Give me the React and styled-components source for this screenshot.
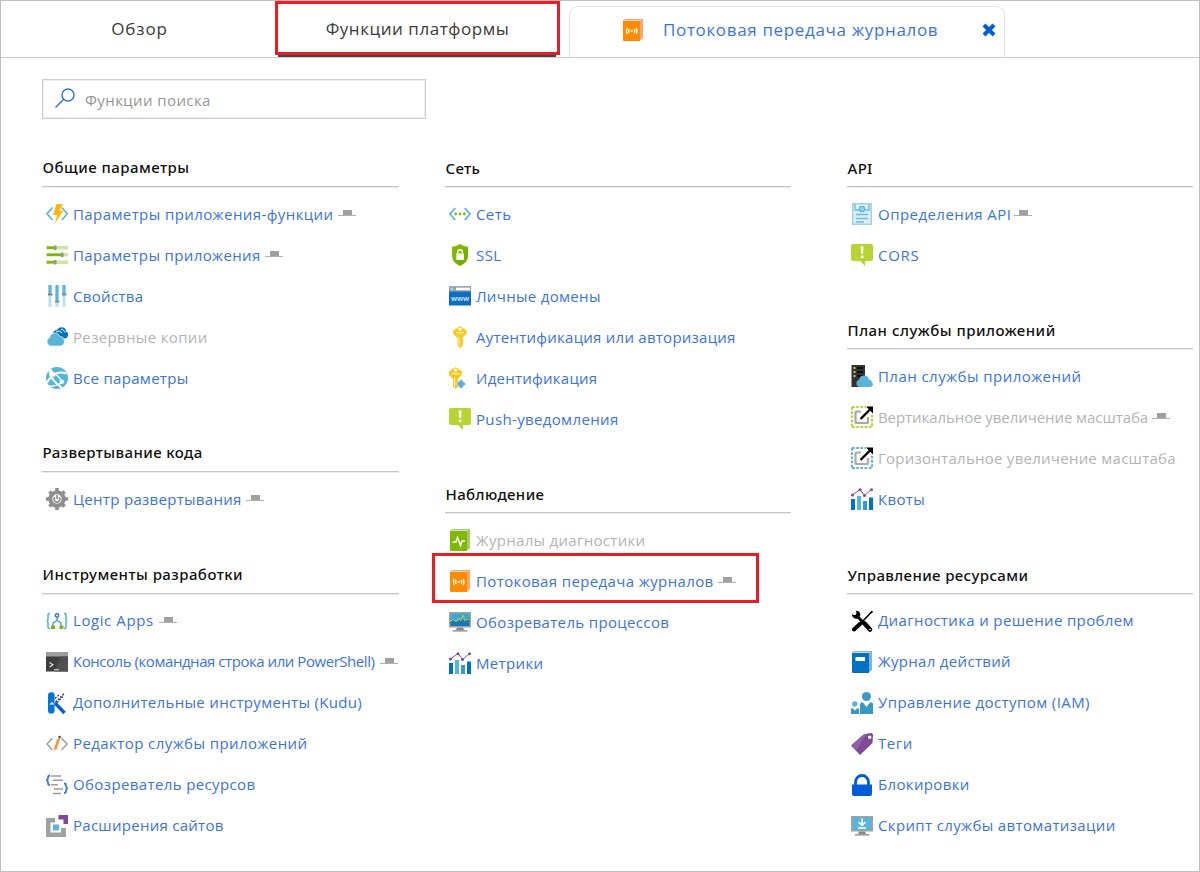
import React from 'react';
import styled, { createGlobalStyle } from 'styled-components';

const GlobalStyle = createGlobalStyle`
  * { box-sizing: border-box; }
  body {
    margin: 0;
    background: #fff;
    font-family: 'Open Sans', 'Noto Sans', sans-serif;
  }
`;

const BLUE = '#3b73dd';
const RED = '#ed1c24';

const Page = styled.div`
  width: 1200px;
  height: 872px;
  overflow: hidden;
  border: 1px solid #c0c0c0;
  background: #fff;
`;

const TabBar = styled.nav`
  display: flex;
  height: 57px;
  border-bottom: 1px solid #c9cccd;
  font-size: 17px;
  color: #3a3a3a;
`;

const Tab = styled.div`
  display: flex;
  justify-content: center;
  width: ${(p) => p.$width}px;
  padding: 15px 0 0 4px;
  line-height: 26px;
  letter-spacing: ${(p) => p.$tracking}px;
`;

const ActiveTab = styled(Tab)`
  position: relative;
  height: 54px;
  margin-left: 1px;
  padding: 12px 0 0;
  border: 3px solid ${RED};

  &::after {
    content: '';
    position: absolute;
    left: 0;
    right: 1px;
    bottom: -5px;
    height: 2px;
    background: #454545;
  }
`;

const OpenTab = styled.div`
  display: flex;
  align-items: flex-start;
  width: 436px;
  height: 51px;
  margin: 5px 0 0 9px;
  padding: 10px 8px 0 52px;
  border: 1px solid #dbe3e7;
  border-bottom: 0;
  border-radius: 9px 9px 0 0;
  color: ${BLUE};
  line-height: 26px;
  letter-spacing: 0.65px;
`;

const OpenTabTitle = styled.span`
  flex: 1;
  margin-left: 19px;
  white-space: nowrap;
`;

const CloseIcon = styled.svg`
  width: 14px;
  height: 14px;
  margin-top: 6px;
`;

const Search = styled.label`
  display: flex;
  align-items: center;
  gap: 9px;
  width: 384px;
  height: 40px;
  margin: 21px 0 0 41px;
  padding: 2px 0 0 11px;
  border: 1.5px solid #cdcdcd;
  box-shadow: inset 0 0 0 1px #efefef;
  color: #959595;
  font-size: 15px;
  letter-spacing: 0.4px;
`;

const SearchIcon = styled.svg`
  width: 22px;
  height: 22px;
  margin-bottom: 4px;
`;

const Columns = styled.main`
  display: grid;
  grid-template-columns: 403px 402px 346px;
  margin: 38px 0 0 41px;
`;

const Column = styled.div`
  display: flex;
  flex-direction: column;
  width: ${(p) => p.$width}px;
`;

const Section = styled.section`
  margin-bottom: ${(p) => p.$after ?? 43}px;
`;

const SectionTitle = styled.h2`
  height: 30px;
  margin: 0;
  padding: ${(p) => p.$drop ?? 0}px 0 0 0.5px;
  border-bottom: 1px solid #c6c6c6;
  box-shadow: 0 1px 0 #ececec;
  color: #111;
  font-family: 'Noto Sans', sans-serif;
  font-size: 15px;
  font-weight: 500;
  line-height: 21px;
  letter-spacing: ${(p) => p.$tracking}px;
  white-space: nowrap;
`;

const List = styled.ul`
  margin: 0;
  padding: 7px 0 0 4px;
  list-style: none;
`;

const Row = styled.li`
  position: relative;
  display: flex;
  align-items: center;
  height: 41px;
`;

const RowIcon = styled.svg`
  flex: none;
  width: 22px;
  height: 22px;
  margin: 0 5px 1px 0;
`;

const TabIcon = styled(RowIcon)`
  margin: 2px 0 0;
`;

const RowLabel = styled.span`
  margin-bottom: ${(p) => p.$lift ?? 2}px;
  color: ${(p) => (p.$muted ? '#b3b3b3' : BLUE)};
  font-size: 15px;
  line-height: 22px;
  letter-spacing: ${(p) => p.$tracking}px;
  white-space: nowrap;
`;

const PinIcon = styled.svg`
  flex: none;
  width: 18px;
  height: 7px;
  margin: 0 0 2px ${(p) => p.$gap ?? 4}px;
`;

const Highlight = styled.div`
  position: absolute;
  left: -17px;
  top: -8px;
  width: 327px;
  height: 50px;
  border: 3px solid ${RED};
`;

const Pin = ({ gap }) => (
  <PinIcon viewBox="0 0 18 7" $gap={gap}>
    <path d="M5 0h9v5H5z" fill="#a0a0a0" />
    <path d="M0 5.500h18" stroke="#b0b0b0" />
  </PinIcon>
);

const chart = (
  <>
    <path d="M0 11h4v11H0z" fill="#0072c6" />
    <path d="M6 8h4v14H6z" fill="#59b4d9" />
    <path d="M12 13h4v9h-4z" fill="#3999c6" />
    <path d="M18 9.500h4V22h-4z" fill="#0072c6" />
    <path d="M1.500 7 9 1.500l4.500 6L20.500 1.500" fill="none" stroke="#804998" />
    <g fill="#804998"><circle cx="1.500" cy="7" r="1.500" /><circle cx="9" cy="1.700" r="1.500" /><circle cx="13.500" cy="7.500" r="1.500" /><circle cx="20.500" cy="1.700" r="1.500" /></g>
  </>
);

const bubble = (
  <>
    <path d="M2 0h18a2 2 0 0 1 2 2v13a2 2 0 0 1-2 2h-6v5l-5-5H2a2 2 0 0 1-2-2V2a2 2 0 0 1 2-2z" fill="#b8d432" />
    <path d="M9.700 2.500h2.800l-.4 7.500h-2z" fill="#fff" />
    <circle cx="11.100" cy="12.700" r="1.500" fill="#fff" />
  </>
);

const scale = (color) => (
  <>
    <path d="M1 1h14M1 21h20V9M1 1v20" fill="none" stroke={color} strokeWidth="2" strokeDasharray="2.700 1.500" />
    <path d="M10 5.500H6A1.500 1.500 0 0 0 4.500 7v8.500A1.500 1.500 0 0 0 6 17h9.500a1.500 1.500 0 0 0 1.500-1.500V11" fill="none" stroke="#a8a9aa" strokeWidth="2.200" />
    <path d="M9.500 13 19 3.500" stroke="#000" strokeWidth="2.400" />
    <path d="M15 .5h7v7z" fill="#000" />
  </>
);

const book = (cover, side, mark) => (
  <>
    <path d="M3 0h18v19l-2 2H1V2z" fill={side} />
    <path d="M3 1h16v1H2z" fill="#e6e6e6" opacity=".8" />
    <path d="M1 2h17v20H2a1 1 0 0 1-1-1z" fill={cover} />
    {mark}
  </>
);

const stream = book('#ff8c00', '#f9a86c', (
  <g fill="none" stroke="#fff" strokeWidth="1.300">
    <circle cx="9.700" cy="12" r="1.100" fill="#fff" stroke="none" />
    <path d="M7.300 10q-1.400 2 0 4M12.100 10q1.400 2 0 4M5.300 9q-1.700 3 0 6M14.100 9q1.700 3 0 6" />
  </g>
));

const key = (
  <path fillRule="evenodd" d="M11 0 17.500 4.500Q18.500 6.500 16.500 8.500L13.500 12v1.500l1.200 1.200-1.200 1.300 1 1.200-1 1.300V20L11 22l-2.500-2v-8L5 8.500Q3.500 6.500 4.500 4.500zM11 1.500a1.600 1.600 0 1 0 .01 0zM7 6.200h8v1H7zM9.700 11v8.500l.8.7V11z" fill="#fcc81e" />
);

const icons = {
  bolt: (
    <>
      <path d="M6.500 4.500 1 10.700l5.500 6.300M15.800 4.500l5.500 6.200-5.500 6.300" fill="none" stroke="#59b4d9" strokeWidth="1.600" />
      <path d="M10.500 1H17l-3.500 6.700H17.500L8.500 21l2.800-9H7z" fill="#fdb813" />
    </>
  ),
  sliders: (
    <>
      <path d="M0 2h22v3.500H0zM0 9h22v3.500H0zM0 16.500h22V20H0z" fill="#cfe3a0" />
      <path d="M1 2.500h8v2.500H1zM1 9.500h14V12H1zM1 17h8v2.500H1z" fill="#7fba00" />
      <path d="M8 1.500h2.500v4.500H8zM15 8.500h2.500V13H15zM8 16h2.500v4.500H8z" fill="#969696" />
    </>
  ),
  properties: (
    <>
      <path d="M2.500 0h3v22h-3zM9.500 0h3v22h-3zM16.500 0h3v22h-3z" fill="#bcdfee" />
      <path d="M2.500 0h3v9h-3zM9.500 0h3v16h-3zM16.500 0h3v9h-3z" fill="#59b4d9" />
      <path d="M2 9.500h4.500M9 16.700h4.500M16 9.500h4.500" stroke="#888" strokeWidth="1.800" />
    </>
  ),
  clouds: (
    <>
      <path d="M7 7Q8 4 11 4q2-3.500 6-2.500 3 .7 3 4 2.500 1 2 4-.5 3-4 3H8z" fill="#0072c6" />
      <path d="M10 5.500q4-1.500 6 1.500M15 3q3 .500 4 3.500" fill="none" stroke="#fff" />
      <path d="M4.500 20a4.500 4.500 0 0 1-.8-8.500Q4.500 7 9 7q3.500 0 5 3.500 3.500-.3 4 3 1 1.500.2 3.500-.9 3-4.200 3z" fill="#59b4d9" stroke="#fff" strokeWidth=".6" />
    </>
  ),
  globe: (
    <>
      <circle cx="11" cy="11" r="11" fill="#59b4d9" />
      <path d="M3.500 4.500Q4 12 16 21M1 15.500Q5 9 8 7.500 13 4 20.500 6.500" fill="none" stroke="#fff" strokeWidth="2" />
      <path d="M7.500 7.500q4-1 8.500 7.500M3.500 19Q9 20 16 15.500" fill="none" stroke="#fff" strokeWidth="1.400" />
      <circle cx="7" cy="7.500" r="2.400" fill="#fff" /><circle cx="15.800" cy="14.800" r="2.200" fill="#fff" />
      <path d="M2.500 4 5 1.500 8 6 4 9z" fill="#fff" />
    </>
  ),
  gear: (
    <>
      <circle cx="11" cy="11" r="6.700" fill="none" stroke="#8f8f8f" strokeWidth="4" />
      <g stroke="#8f8f8f" strokeWidth="3.600"><path d="M11 0v4M11 18v4M0 11h4M18 11h4M3.400 3.400l3 3M15.600 15.600l3 3M18.600 3.400l-3 3M6.400 15.600l-3 3" /></g>
      <path d="M9 9.300a2.800 2.800 0 1 0 4 0M11 7v4" fill="none" stroke="#8f8f8f" strokeWidth="1.700" />
    </>
  ),
  logic: (
    <>
      <path d="M4 3.500H3.200Q2 3.500 2 5v4q0 2-1.500 2Q2 11 2 13v4q0 1.500 1.200 1.500H4M18 3.500h.8Q20 3.500 20 5v4q0 2 1.500 2Q20 11 20 13v4q0 1.500-1.200 1.500H18" fill="none" stroke="#59b4d9" strokeWidth="1.600" />
      <path d="M11 6.500v4M7 16v-3l4-2.500 4 2.500v3" fill="none" stroke="#3999c6" strokeWidth="1.300" />
      <circle cx="11" cy="5.500" r="1.700" fill="#fff" stroke="#3b73b9" strokeWidth="1.500" />
      <path d="M5 15.500h4V19H5zM13.500 15.500h4V19h-4z" fill="#7fba00" />
    </>
  ),
  console: (
    <>
      <path d="M0 1.500h22v19H0z" fill="#3e3e3e" />
      <path d="M0 1.500h22v4H0z" fill="#9c9c9c" />
      <path d="M15 5.500h7v15H8z" fill="#505050" />
      <path d="M3.500 11.500 7 13.700 3.500 16M8 18.700h5" fill="none" stroke="#e4e4e4" strokeWidth="1.100" />
    </>
  ),
  kudu: (
    <>
      <path d="M2 3.500a3.300 3.300 0 0 1 6.600 0v15a3.300 3.300 0 0 1-6.600 0z" fill="#0078d0" />
      <path d="m9 11 9.500 10" stroke="#0a5bd0" strokeWidth="3.400" />
      <path d="M3.500 12.500 6 10l2.500 2.500z" fill="#fff" />
      <path d="m9.500 10 9-9M11 10.500l7-7M9 6.500l4-3.500" stroke="#333" strokeWidth="1.200" strokeDasharray="2 1.200" />
    </>
  ),
  editor: (
    <>
      <path d="M6.500 5 1 11l5.500 6M15.500 5l5.500 6-5.500 6" fill="none" stroke="#a0a1a2" strokeWidth="1.600" />
      <path d="m9 16.500 4-11" stroke="#f7943b" strokeWidth="2.600" />
      <path d="m7.600 19 .3-3 2.400.8z" fill="#e5c29a" /><circle cx="13.600" cy="4" r="1.300" fill="#444" />
    </>
  ),
  resources: (
    <>
      <path d="M4 1.500Q2 1.500 2 3.500T.7 6.300Q2 7 2 9t2 2M18 9.500q2 0 2 2t1.300 2.800Q20 15 20 17t-2 2.200" fill="none" stroke="#3b73dd" strokeWidth="1.800" />
      <path d="M5 2h10M7 6.300h10M5 10.700h7M8 15h9M7 19.500h8" stroke="#9a9a9a" strokeWidth="1.500" />
    </>
  ),
  extensions: (
    <>
      <path d="M0 3h9v4.500H4.500v10H15V13h5v9H0z" fill="#a0a1a2" />
      <path d="M12.500 0H22v9h-4.500V4.500h-5z" fill="#804998" />
      <path d="M7 9.500h6v6H7z" fill="#59b4d9" />
    </>
  ),
  network: (
    <>
      <path d="M6.300 5 1 11l5.300 6M15.700 5l5.300 6-5.300 6" fill="none" stroke="#59b4d9" strokeWidth="1.700" />
      <g fill="#7fba00"><circle cx="6.700" cy="11" r="1.400" /><circle cx="11" cy="11" r="1.400" /><circle cx="15.300" cy="11" r="1.400" /></g>
    </>
  ),
  shield: (
    <>
      <path d="M11 0q3.500 2.500 8 2.800V12q0 6-8 10-8-4-8-10V2.800Q7.500 2.500 11 0z" fill="#7fba00" />
      <path d="M19 2.800V12q0 6-8 10L5 17z" fill="#6ba300" opacity=".5" />
      <path d="M7.300 9.500h7.600V16H7.300z" fill="#fff" /><path d="M8.800 9.500V8a2.300 2.300 0 0 1 4.600 0v1.500" fill="none" stroke="#fff" strokeWidth="1.500" />
    </>
  ),
  www: (
    <>
      <path d="M0 1.500h22v19H0z" fill="#0a6fc2" /><path d="M0 1.500h22v5H0z" fill="#a0a1a2" />
      <path d="M7 2.700h14v2.500H7z" fill="#fff" /><circle cx="3" cy="4" r="1.400" fill="#8fe0f5" />
      <text x="11" y="15.500" fill="#d8ebfa" fontFamily="Open Sans, sans-serif" fontSize="7.500" fontWeight="600" textAnchor="middle" textLength="18">www</text>
    </>
  ),
  key,
  identity: (
    <>
      <g transform="translate(-4.500 0)">{key}</g>
      <path d="m12 12 5.200 5-5.200 5-5.200-5z" fill="#74bbdc" stroke="#fff" strokeWidth=".5" />
      <path d="M12 14v6M9.500 17h5" stroke="#4aa3cc" />
    </>
  ),
  bubble,
  diagnostics: book('#7fba00', '#a6c673', <path d="M3.500 13H7l1.500-4.500 3 8L13 12h3" fill="none" stroke="#fff" strokeWidth="1.500" />),
  stream,
  processes: (
    <>
      <path d="M0 1h22v15.500H0z" fill="#a0a1a2" /><path d="M1.500 2.500h19V15h-19z" fill="#3aa6d6" /><path d="M1.500 11l3-2 3 2 4-3 3 1 6-2v8h-19z" fill="#1a74b8" />
      <path d="m1.500 10 3-1.500L7 11l3-4 1.500 3L14 4l2 6 2-2 2.500 1" fill="none" stroke="#b8d432" />
      <path d="M8 16.500h6l1 2.500H7z" fill="#888" /><path d="M4 19h14v1.700H4z" fill="#a0a1a2" />
    </>
  ),
  chart,
  definitions: (
    <>
      <path d="M1 0h20v22H1z" fill="#d9eef7" /><path d="M1.700.7h18.600v20.600H1.700z" fill="none" stroke="#9fd2e8" strokeWidth="1.400" />
      <path d="M4 1v6h4M18 1v6h-4M5 11.500h12M5 15.500h12M5 19h8" fill="none" stroke="#6fbcdc" strokeWidth="1.300" />
      <circle cx="11" cy="6" r="2.500" fill="none" stroke="#59b4d9" strokeWidth="1.400" /><circle cx="11" cy="6" r=".8" fill="#3999c6" />
    </>
  ),
  plan: (
    <>
      <path d="M.5 0H14v22H.5z" fill="#333" />
      <path d="M2.500 3h2M2.500 7h2M2.500 11h2" stroke="#b8d432" strokeWidth="2" /><path d="M6 3h6M6 7h6M6 11h6" stroke="#111" strokeWidth="2" />
      <path d="M8.500 22a3.700 3.700 0 0 1-.5-7.200Q9 10.500 13 10.500t5 4q2.500 0 2.800 2.700 1.500 1 1 2.800T19 22z" fill="#59b4d9" />
    </>
  ),
  scaleUp: scale('#b8d432'),
  scaleOut: scale('#59b4d9'),
  tools: (
    <>
      <path d="m6.500 6.500 12 12.500" stroke="#000" strokeWidth="3" />
      <path d="m13.500 13.500 5.500 6" stroke="#000" strokeWidth="4.500" strokeLinecap="round" />
      <path d="M5 .8 5.500 3.500 4.500 5 2 5 1 3.500Q.7 7.500 4 8.500q3 .7 4.500-1.200T9 3Q8 .8 5 .8z" fill="#000" />
      <path d="m3 19.500 6.500-6" stroke="#000" strokeWidth="4" strokeLinecap="round" /><path d="m9 14 11-11.500 1.500-1.300" stroke="#000" strokeWidth="1.700" />
      <circle cx="19" cy="19.500" r=".8" fill="#fff" />
    </>
  ),
  log: book('#0072c6', '#7fb5dd', <path d="M4.500 6h9.500v4H4.500z" fill="#fff" />),
  people: (
    <>
      <circle cx="15.500" cy="4.500" r="4.500" fill="#3999c6" /><path d="M9 22V12q0-1.500 1.500-1.500H12l3.500 4.500 3.500-4.500h1.500Q22 10.500 22 12v10z" fill="#3999c6" />
      <circle cx="3.800" cy="12" r="2.700" fill="#59b4d9" /><path d="M0 22v-4.500Q0 16 1.500 16l2.500 2.500L6.500 16Q8 16 8 17.500V22z" fill="#3999c6" />
    </>
  ),
  tag: (
    <>
      <path fillRule="evenodd" d="M12.500 1.500 20 0q2 0 2 2l-.5 8L9 22 0 12.500zM18.700 2.500a1.700 1.700 0 1 0 .01 0z" fill="#804998" /><path d="M12.500 1.500 16 .8 5 18l-5-5.500z" fill="#a67fb8" opacity=".4" />
    </>
  ),
  lock: (
    <>
      <path d="M1 10.500h20V20q0 2-2 2H3q-2 0-2-2z" fill="#015cda" /><path d="M4.500 11V8a6.500 6.500 0 0 1 13 0v3" fill="none" stroke="#015cda" strokeWidth="2.800" />
    </>
  ),
  script: (
    <>
      <path d="M0 1h22v15.500H0z" fill="#a0a1a2" /><path d="M1.500 2.500h19V15h-19z" fill="#59b4d9" />
      <path d="M11 3.500v6M7.500 7l3.500 3.500L14.500 7M7 13h8" fill="none" stroke="#fff" strokeWidth="1.500" />
      <path d="M8 16.500h6l1 2.500H7z" fill="#888" /><path d="M4 19h14v1.700H4z" fill="#a0a1a2" />
    </>
  ),
};

const columns = [
  { width: 357, sections: [
    { title: 'Общие параметры', tracking: 0.47, items: [
      { icon: 'bolt', label: 'Параметры приложения-функции', tracking: 0.41, pin: true },
      { icon: 'sliders', label: 'Параметры приложения', tracking: 0.37, pin: true },
      { icon: 'properties', label: 'Свойства', tracking: 0.33 },
      { icon: 'clouds', label: 'Резервные копии', tracking: 0.35, muted: true },
      { icon: 'globe', label: 'Все параметры', tracking: 0.31 },
    ] },
    { title: 'Развертывание кода', tracking: 0.4, after: 44, items: [
      { icon: 'gear', label: 'Центр развертывания', tracking: 0.3, pin: true },
    ] },
    { title: 'Инструменты разработки', tracking: 0.45, lift: 4, items: [
      { icon: 'logic', label: 'Logic Apps', tracking: 0.58, pin: true, pinGap: 5 },
      { icon: 'console', label: 'Консоль (командная строка или PowerShell)', tracking: -0.45, pin: true, pinGap: 6 },
      { icon: 'kudu', label: 'Дополнительные инструменты (Kudu)', tracking: 0.32 },
      { icon: 'editor', label: 'Редактор службы приложений', tracking: 0.42 },
      { icon: 'resources', label: 'Обозреватель ресурсов', tracking: 0.38 },
      { icon: 'extensions', label: 'Расширения сайтов', tracking: 0.27 },
    ] },
  ] },
  { width: 346, drop: 1, sections: [
    { title: 'Сеть', tracking: 0.3, items: [
      { icon: 'network', label: 'Сеть', tracking: 0.4 },
      { icon: 'shield', label: 'SSL', tracking: 0.4 },
      { icon: 'www', label: 'Личные домены', tracking: 0.32 },
      { icon: 'key', label: 'Аутентификация или авторизация', tracking: 0.25 },
      { icon: 'identity', label: 'Идентификация', tracking: 0.25 },
      { icon: 'bubble', label: 'Push-уведомления', tracking: 0.35 },
    ] },
    { title: 'Наблюдение', tracking: 0.4, items: [
      { icon: 'diagnostics', label: 'Журналы диагностики', tracking: 0.3, muted: true },
      { icon: 'stream', label: 'Потоковая передача журналов', tracking: 0.38, pin: true, highlight: true },
      { icon: 'processes', label: 'Обозреватель процессов', tracking: 0.35 },
      { icon: 'chart', label: 'Метрики', tracking: 0.35 },
    ] },
  ] },
  { width: 346, drop: 1, sections: [
    { title: 'API', tracking: 0.3, items: [
      { icon: 'definitions', label: 'Определения API', tracking: 0.46, pin: true, pinGap: 3 },
      { icon: 'bubble', label: 'CORS', tracking: 0.75 },
    ] },
    { title: 'План службы приложений', tracking: 0.5, after: 44, items: [
      { icon: 'plan', label: 'План службы приложений', tracking: 0.45 },
      { icon: 'scaleUp', label: 'Вертикальное увеличение масштаба', tracking: -0.07, muted: true, pin: true },
      { icon: 'scaleOut', label: 'Горизонтальное увеличение масштаба', tracking: 0.26, muted: true },
      { icon: 'chart', label: 'Квоты', tracking: 0.35 },
    ] },
    { title: 'Управление ресурсами', tracking: 0.38, lift: 4, items: [
      { icon: 'tools', label: 'Диагностика и решение проблем', tracking: 0.36 },
      { icon: 'log', label: 'Журнал действий', tracking: 0.32 },
      { icon: 'people', label: 'Управление доступом (IAM)', tracking: 0.41 },
      { icon: 'tag', label: 'Теги', tracking: 0.5 },
      { icon: 'lock', label: 'Блокировки', tracking: 0.35 },
      { icon: 'script', label: 'Скрипт службы автоматизации', tracking: 0.36 },
    ] },
  ] },
];

export default function App() {
  return (
    <Page>
      <GlobalStyle />
      <TabBar>
        <Tab $width={273} $tracking={0.9}>Обзор</Tab>
        <ActiveTab $width={285} $tracking={0.55}>Функции платформы</ActiveTab>
        <OpenTab>
          <TabIcon viewBox="0 0 22 22">{stream}</TabIcon>
          <OpenTabTitle>Потоковая передача журналов</OpenTabTitle>
          <CloseIcon viewBox="0 0 14 14"><path d="m2 2 10 10M12 2 2 12" stroke="#015cda" strokeWidth="4" /></CloseIcon>
        </OpenTab>
      </TabBar>
      <Search>
        <SearchIcon viewBox="0 0 22 22">
          <circle cx="14" cy="8" r="6" fill="none" stroke={BLUE} strokeWidth="1.500" />
          <path d="M9.700 12.300 1.500 20.500" stroke={BLUE} strokeWidth="1.500" />
        </SearchIcon>
        Функции поиска
      </Search>
      <Columns>
        {columns.map((column, index) => (
          <Column key={index} $width={column.width}>
            {column.sections.map((section) => (
              <Section key={section.title} $after={section.after}>
                <SectionTitle $tracking={section.tracking} $drop={column.drop}>{section.title}</SectionTitle>
                <List>
                  {section.items.map((item) => (
                    <Row key={item.label}>
                      <RowIcon viewBox="0 0 22 22">{icons[item.icon]}</RowIcon>
                      <RowLabel $tracking={item.tracking} $muted={item.muted} $lift={section.lift}>{item.label}</RowLabel>
                      {item.pin && <Pin gap={item.pinGap} />}
                      {item.highlight && <Highlight />}
                    </Row>
                  ))}
                </List>
              </Section>
            ))}
          </Column>
        ))}
      </Columns>
    </Page>
  );
}
